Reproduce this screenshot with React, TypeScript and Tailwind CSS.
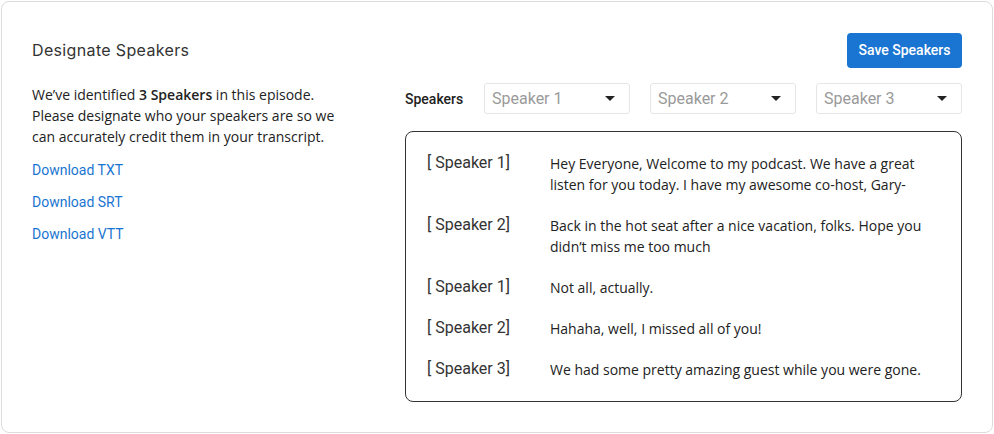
import React from "react";

const ROWS = [
  { speaker: "[ Speaker 1]", text: "Hey Everyone, Welcome to my podcast. We have a great listen for you today. I have my awesome co-host, Gary-" },
  { speaker: "[ Speaker 2]", text: "Back in the hot seat after a nice vacation, folks. Hope you didn’t miss me too much" },
  { speaker: "[ Speaker 1]", text: "Not all, actually." },
  { speaker: "[ Speaker 2]", text: "Hahaha, well, I missed all of you!" },
  { speaker: "[ Speaker 3]", text: "We had some pretty amazing guest while you were gone." },
];

const SpeakerSelect = ({ label }: { label: string }) => (
  <div className="w-[146px] h-[31px] border border-[#e6e6e6] rounded-[3px] bg-white flex items-center justify-between pl-[7px] pr-[14px]">
    <span className="text-[16px] text-[#9a9a9a] font-['Roboto',sans-serif]">{label}</span>
    <span className="w-0 h-0 border-l-[5px] border-r-[5px] border-t-[5px] border-l-transparent border-r-transparent border-t-[#222]" />
  </div>
);

export default function App() {
  return (
    <div className="w-[994px] h-[434px] bg-white p-px">
      <div className="w-[992px] h-[432px] border border-[#dcdcdc] rounded-[8px] pt-[31px] pl-[30px] pr-[30px]">
        <div className="flex items-center justify-between h-[35px]">
          <h1 className="text-[16px] text-[#333] font-['Inter',sans-serif] tracking-[0.35px] mt-[-1px]">Designate Speakers</h1>
          <button className="h-[35px] w-[115px] rounded-[4px] bg-[#1a75d2] text-white text-[14px] font-medium font-['Roboto',sans-serif]">
            Save Speakers
          </button>
        </div>
        <div className="flex gap-[58px] mt-[15px]">
          <div className="w-[315px] shrink-0">
            <p className="text-[14px] leading-[21px] text-[#222] font-['Open_Sans',sans-serif] mt-px">
              We’ve identified <b className="font-semibold">3 Speakers</b> in this episode. Please designate who your speakers are so we can accurately credit them in your transcript.
            </p>
            <div className="flex flex-col gap-[15px] mt-[15px] font-['Roboto',sans-serif] text-[14px] leading-[17px] text-[#1a75d2] font-normal">
              <a>Download TXT</a>
              <a>Download SRT</a>
              <a>Download VTT</a>
            </div>
          </div>
          <div className="flex-1">
            <div className="flex items-center justify-between">
              <span className="text-[14px] font-medium text-[#222] font-['Roboto',sans-serif] mt-[2px]">Speakers</span>
              <div className="flex gap-[20px]">
                <SpeakerSelect label="Speaker 1" />
                <SpeakerSelect label="Speaker 2" />
                <SpeakerSelect label="Speaker 3" />
              </div>
            </div>
            <div className="mt-[17px] border border-[#333] rounded-[8px] px-[21px] pt-[21px] pb-[21px] flex flex-col gap-[20px]">
              {ROWS.map((row, i) => (
                <div key={i} className="flex">
                  <span className="w-[123px] shrink-0 text-[16px] leading-[19px] text-[#333] font-['Roboto',sans-serif]">{row.speaker}</span>
                  <p className="text-[14px] leading-[21px] text-[#222] font-['Open_Sans',sans-serif]">{row.text}</p>
                </div>
              ))}
            </div>
          </div>
        </div>
      </div>
    </div>
  );
}
